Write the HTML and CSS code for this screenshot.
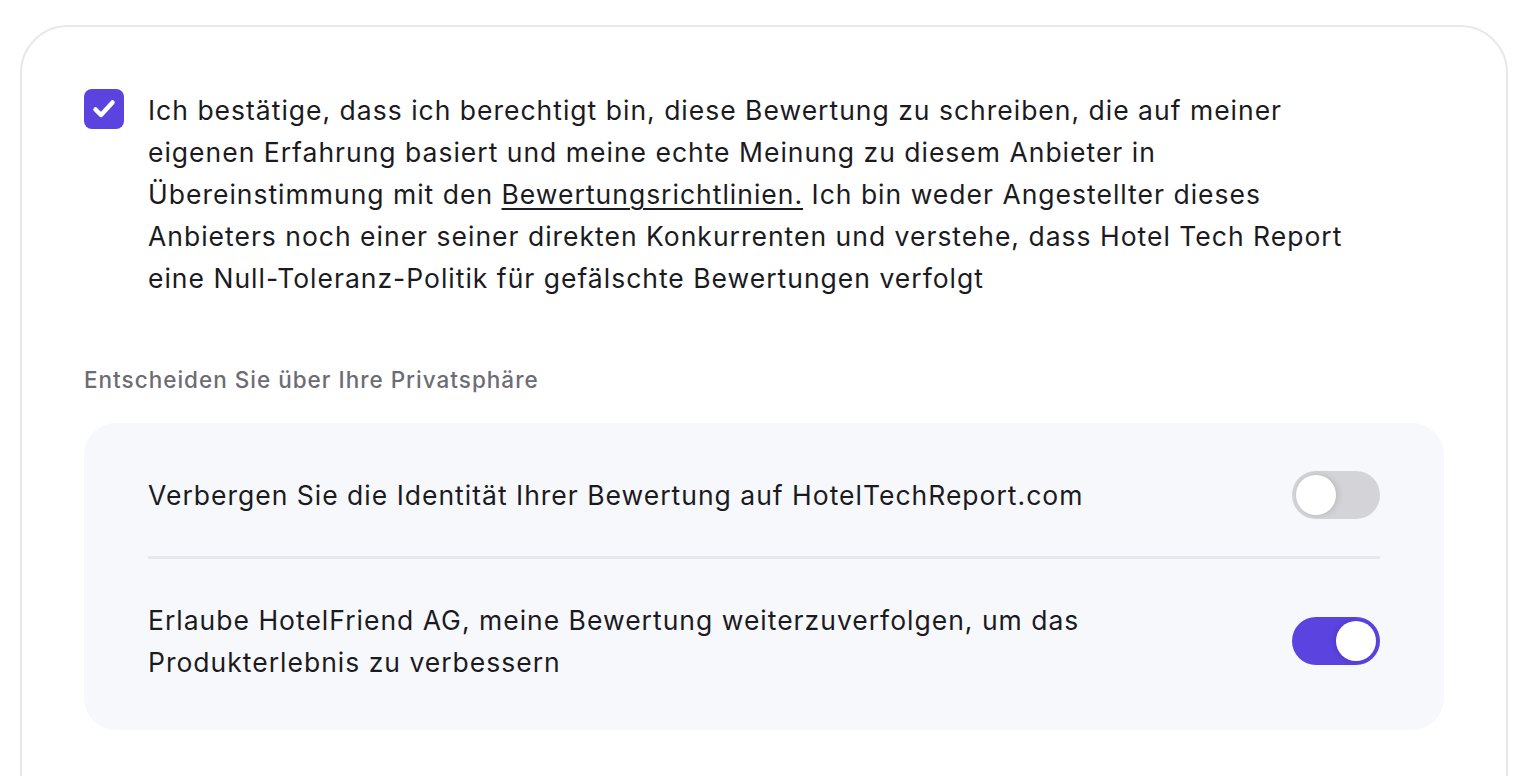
FILE: index.html
```html
<!DOCTYPE html>
<html lang="de">
<head>
<meta charset="utf-8">
<link rel="stylesheet" href="styles.css">
</head>
<body>
<div class="card">
  <div class="consent">
    <span class="checkbox">
      <svg width="40" height="40" viewBox="0 0 40 40"><path d="M11.5 20.5 L17 26 L28.5 13.5" fill="none" stroke="#fff" stroke-width="4.5" stroke-linecap="round" stroke-linejoin="round"/></svg>
    </span>
    <p class="consent-text">Ich bestätige, dass ich berechtigt bin, diese Bewertung zu schreiben, die auf meiner eigenen Erfahrung basiert und meine echte Meinung zu diesem Anbieter in Übereinstimmung mit den <a href="#" class="link">Bewertungsrichtlinien.</a> Ich bin weder Angestellter dieses Anbieters noch einer seiner direkten Konkurrenten und verstehe, dass Hotel Tech Report eine Null-Toleranz-Politik für gefälschte Bewertungen verfolgt</p>
  </div>
  <h3 class="section-title">Entscheiden Sie über Ihre Privatsphäre</h3>
  <div class="privacy-box">
    <div class="row">
      <span class="row-text">Verbergen Sie die Identität Ihrer Bewertung auf HotelTechReport.com</span>
      <span class="toggle"><span class="knob"></span></span>
    </div>
    <div class="divider"></div>
    <div class="row">
      <span class="row-text">Erlaube HotelFriend AG, meine Bewertung weiterzuverfolgen, um das Produkterlebnis zu verbessern</span>
      <span class="toggle on"><span class="knob"></span></span>
    </div>
  </div>
</div>
</body>
</html>
```
FILE: styles.css
```css
html, body {
  margin: 0;
  padding: 0;
  background: #ffffff;
  font-family: Inter, "Noto Sans", sans-serif;
  color: #1b1b1f;
}
body {
  padding: 25px 20px 0 20px;
  height: 776px;
  box-sizing: border-box;
  overflow: hidden;
}
.card {
  border: 2px solid #e8e8ec;
  border-radius: 48px;
  padding: 62px 62px 80px 62px;
  min-height: 900px;
  box-sizing: border-box;
}
.consent {
  display: flex;
  align-items: flex-start;
  gap: 24px;
}
.checkbox {
  flex: 0 0 40px;
  width: 40px;
  height: 40px;
  border-radius: 8px;
  background: #5b43df;
  display: flex;
  align-items: center;
  justify-content: center;
}
.consent-text {
  margin: 0;
  font-size: 26.5px;
  letter-spacing: 1px;
  line-height: 42px;
  max-width: 1210px;
}
.link {
  color: inherit;
  text-decoration: underline;
  text-underline-offset: 4px;
  text-decoration-thickness: 2px;
}
.section-title {
  margin: 65px 0 27px 0;
  font-size: 22.5px;
  letter-spacing: 1px;
  line-height: 32px;
  font-weight: 500;
  color: #6d6c76;
}
.privacy-box {
  background: #f7f8fc;
  border-radius: 32px;
  padding: 48px 64px 47px 64px;
}
.row {
  display: flex;
  align-items: center;
  justify-content: space-between;
  gap: 40px;
}
.row-text {
  font-size: 26.5px;
  letter-spacing: 1px;
  line-height: 42px;
  max-width: 960px;
}
.divider {
  height: 3px;
  background: #e7e7ed;
  margin: 37px 0 40px 0;
}
.toggle {
  flex: 0 0 88px;
  width: 88px;
  height: 48px;
  border-radius: 24px;
  background: #d4d4d8;
  box-sizing: border-box;
  padding: 4px;
  display: flex;
  justify-content: flex-start;
}
.toggle .knob {
  width: 40px;
  height: 40px;
  border-radius: 50%;
  background: #ffffff;
  box-shadow: 2px 0 6px rgba(0,0,0,0.12);
}
.toggle.on {
  background: #5b43df;
  justify-content: flex-end;
}
.toggle.on .knob {
  box-shadow: -2px 0 6px rgba(0,0,0,0.12);
}
```
